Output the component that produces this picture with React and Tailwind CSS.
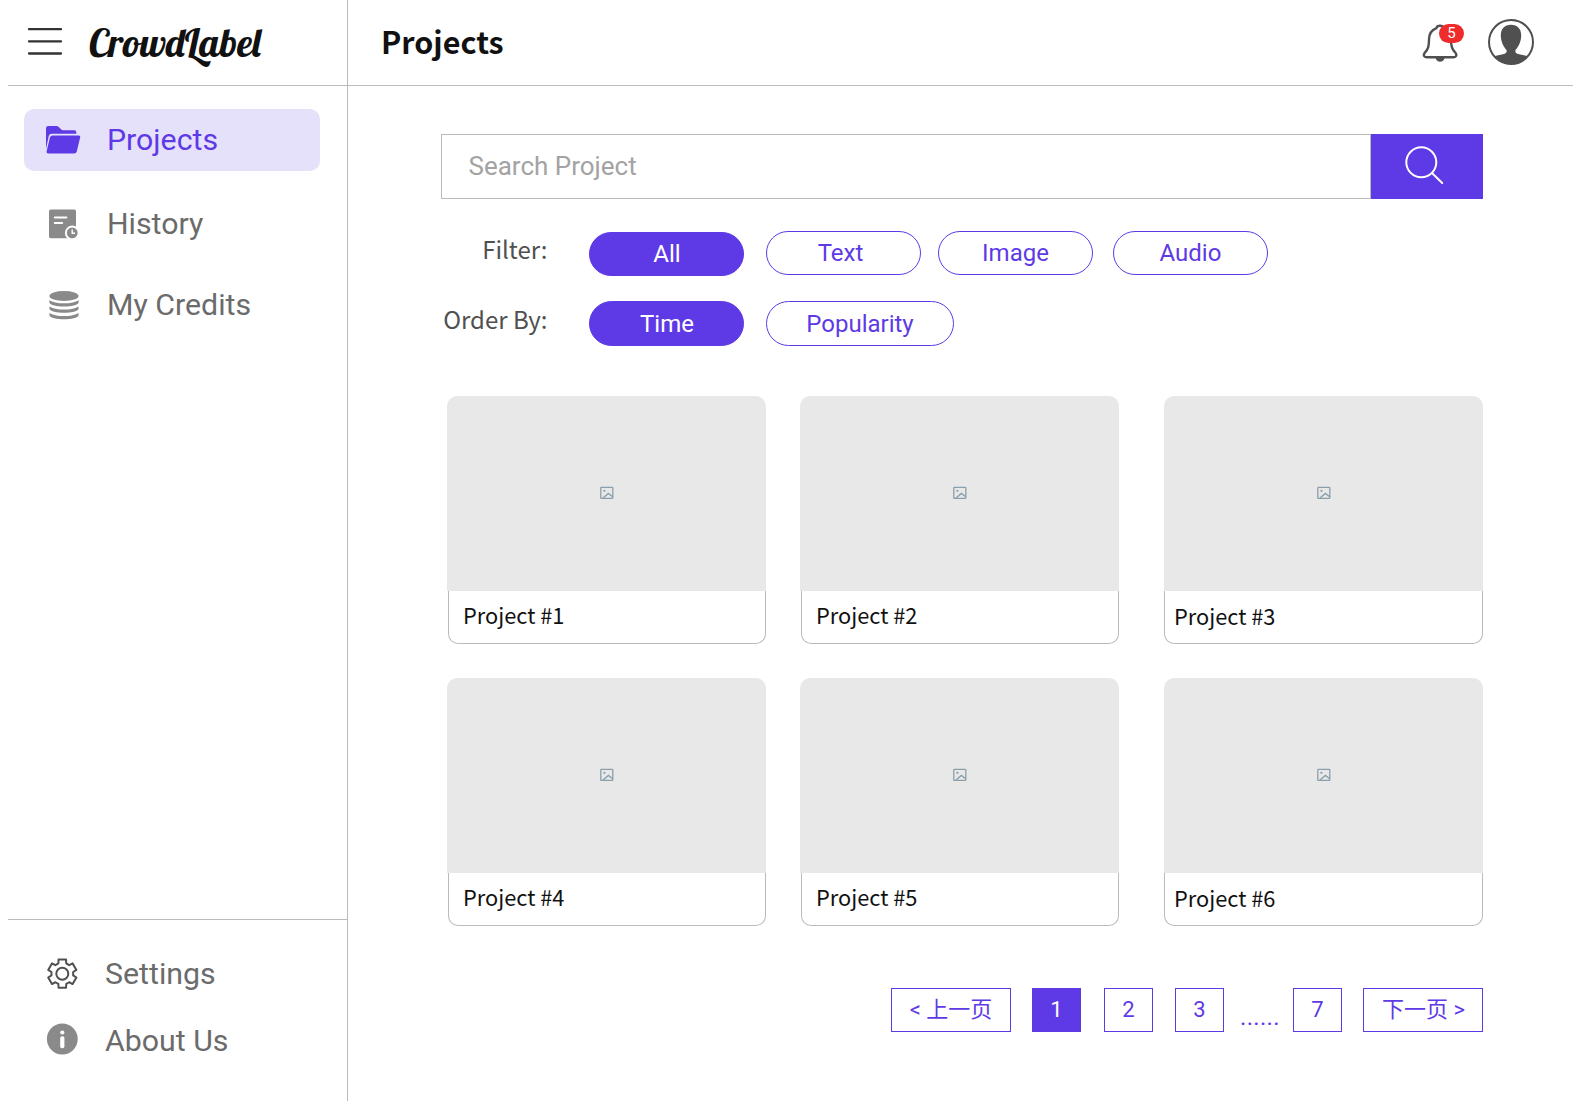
import React from "react";

const CJK = "font-['Noto_Sans_CJK_SC',sans-serif]";

function Gear() {
  const pts = [];
  for (let i = 0; i < 6; i++) {
    [[-21, 11], [-15, 14.6], [15, 14.6], [21, 11]].forEach(([d, r]) => {
      const a = ((i * 60 + d - 90) * Math.PI) / 180;
      pts.push(`${(16.3 + r * Math.cos(a)).toFixed(2)},${(15.7 + r * Math.sin(a)).toFixed(2)}`);
    });
  }
  return (
    <svg width="32" height="32" viewBox="0 0 32 32" fill="none" stroke="#505050" strokeWidth="2" strokeLinejoin="round">
      <polygon points={pts.join(" ")} />
      <circle cx="16.3" cy="15.7" r="6" />
    </svg>
  );
}

function Info() {
  return (
    <svg width="32" height="32" viewBox="0 0 32 32">
      <circle cx="16.3" cy="16" r="15.4" fill="#8a8a8a" />
      <circle cx="16.3" cy="9.5" r="2.1" fill="#fff" />
      <rect x="14.2" y="13.2" width="4.2" height="12" rx="1.9" fill="#fff" />
    </svg>
  );
}

function Folder() {
  return (
    <svg width="36" height="30" viewBox="0 0 36 30" fill="#5e3ae6">
      <path d="M1 24V3.2Q1 1 3.2 1H11.5Q12.8 1 13.7 2L16.3 4.6Q16.8 5.2 17.8 5.2H29.5Q31.3 5.2 31.3 7V8.8H7Q4.3 8.8 3.7 11.2Z" />
      <path d="M7.8 10.4H33.8Q35.7 10.4 35.2 12.3L31.8 26.4Q31.3 28.4 29.3 28.4H3.2Q1.2 28.4 1.6 26.4L4.9 12.4Q5.4 10.4 7.8 10.4Z" />
    </svg>
  );
}

function HistoryIcon() {
  return (
    <svg width="30" height="30" viewBox="0 0 30 30">
      <rect x="0" y="0.5" width="27" height="28.8" rx="1.8" fill="#8a8a8a" />
      <path d="M5.8 8.5H17.4M5.8 14.1H13.2" stroke="#fff" strokeWidth="2" strokeLinecap="round" />
      <circle cx="23.2" cy="23.9" r="7.3" fill="#fff" />
      <circle cx="23.2" cy="23.9" r="5.4" fill="#8a8a8a" />
      <path d="M23.2 20.6V24.2H26" stroke="#fff" strokeWidth="1.4" fill="none" />
    </svg>
  );
}

function Database() {
  return (
    <svg width="30" height="30" viewBox="0 0 30 30" fill="#8a8a8a">
      <ellipse cx="15" cy="6" rx="14.6" ry="5.1" />
      {[0, 6.3, 12.8].map((y) => (
        <path key={y} transform={`translate(0 ${y})`} d="M.4 10.2Q5 13.3 15 13.3T29.6 10.2V12.4C29 15 22 16.4 15 16.4S1 15 .4 12.4Z" />
      ))}
    </svg>
  );
}

function Bell() {
  return (
    <svg width="36" height="38" viewBox="0 0 36 38" fill="none" stroke="#505050" strokeWidth="2.4" strokeLinejoin="round">
      <path d="M14.4 4.2C15.2 1 20.8 1 21.6 4.2C27 6.2 29 10.4 29 15.5C29 22.5 30 24.8 33.4 28.8C35.2 31 34.2 33.2 31.8 33.2H4.4C2 33.2 1 31 2.8 28.8C6.2 24.8 7 22.5 7 15.5C7 10.4 9.4 6.2 14.4 4.2Z" />
      <path d="M13.6 33.8H22.6C22 39 14.2 39 13.6 33.8Z" fill="#505050" stroke="none" />
    </svg>
  );
}

function Avatar() {
  return (
    <svg width="48" height="48" viewBox="0 0 48 48">
      <clipPath id="face"><circle cx="24" cy="24" r="22.4" /></clipPath>
      <g clipPath="url(#face)" fill="#505050">
        <path d="M24 6.8C30.8 6.8 34.4 11.4 34.2 18C34 25.4 29.6 31 28.4 32C28.2 35 29 35.4 32 36.2C37 37.2 41 38 45 40V48H3V40C7 38 11 37.2 16 36.2C19 35.4 19.8 35 19.6 32C18.4 31 14 25.4 13.8 18C13.6 11.4 17.2 6.8 24 6.8Z" />
      </g>
      <circle cx="24" cy="24" r="22" fill="none" stroke="#505050" strokeWidth="2" />
    </svg>
  );
}

function NavItem({ icon, label, className = "", labelClass = "ml-[107px]" }) {
  return (
    <a className={`grid h-[62px] items-center text-[30.3px] leading-none ${className}`}>
      <span className="col-start-1 row-start-1 flex">{icon}</span>
      <span className={`col-start-1 row-start-1 ${labelClass}`}>{label}</span>
    </a>
  );
}

function Pill({ children, active, className = "" }) {
  return (
    <button
      className={`flex items-center justify-center rounded-full border border-[#5e3ae6] text-[24px] leading-none ${
        active ? "bg-[#5e3ae6] text-white" : "text-[#5e3ae6]"
      } ${className}`}
    >
      {children}
    </button>
  );
}

function Card({ title, last }) {
  return (
    <article className="flex h-[248px] w-[319px] flex-col">
      <div className="flex h-[195px] items-center justify-center rounded-t-[10px] bg-[#e8e8e8] pb-px">
        <svg width="14" height="14" viewBox="0 0 14 14" fill="none" stroke="#8a9fab" strokeWidth="1.3">
          <rect x=".8" y="1.4" width="12" height="11" rx=".6" />
          <circle cx="4.4" cy="4.8" r="1.1" fill="#8a9fab" stroke="none" />
          <path d="M3 12L8.4 7.4L13 11" />
        </svg>
      </div>
      <div
        className={`flex h-[53px] items-center rounded-b-[10px] border border-t-0 border-[#bbb] text-[21.8px] leading-none text-[#111] ${CJK} ${
          last ? "pb-[3px] pl-[9px]" : "ml-[1px] pb-[5px] pl-[14px]"
        }`}
      >
        {title}
      </div>
    </article>
  );
}

function Page({ children, active, className = "w-[49px]" }) {
  return (
    <button
      className={`flex h-[44px] items-center justify-center border border-[#5e3ae6] text-[22px] leading-none ${
        active ? "bg-[#5e3ae6] text-white" : "text-[#5e3ae6]"
      } ${className}`}
    >
      {children}
    </button>
  );
}

export default function App() {
  return (
    <div className="flex h-[1101px] w-[1573px] overflow-hidden bg-white font-[Roboto,'Noto_Sans_CJK_SC',sans-serif]">
      <aside className="flex w-[348px] flex-col border-r border-[#bbb] text-[#6b6b6b]">
        <div className="ml-2 flex h-[86px] shrink-0 items-center border-b border-[#bbb] pb-[3px] pl-[19px]">
          <svg width="36" height="30" viewBox="0 0 36 30" stroke="#333" strokeWidth="2.3" strokeLinecap="round">
            <path d="M2 3.2H34M2 15.4H34M2 27.5H34" />
          </svg>
          <span className="mt-[3px] ml-[26px] block whitespace-nowrap font-['Lobster','Liberation_Serif',serif] text-[39.1px] leading-none text-[#111]">
            CrowdLabel
          </span>
        </div>
        <nav className="flex flex-col pt-[23px]">
          <NavItem
            icon={<span className="ml-[21px]"><Folder /></span>}
            label="Projects"
            labelClass="ml-[83px]"
            className="ml-6 w-[296px] rounded-[10px] bg-[#e6e1fb] text-[#5e3ae6]"
          />
          <NavItem icon={<span className="ml-[49px]"><HistoryIcon /></span>} label="History" className="mt-[22px]" />
          <NavItem icon={<span className="ml-[49px]"><Database /></span>} label="My Credits" className="mt-[19px]" />
        </nav>
        <div className="mt-auto ml-2 flex h-[182px] flex-col border-t border-[#bbb] pt-[23px]">
          <NavItem icon={<span className="ml-[38px]"><Gear /></span>} label="Settings" labelClass="ml-[97px]" />
          <NavItem icon={<span className="-mt-[5px] ml-[38px]"><Info /></span>} label="About Us" labelClass="ml-[97px]" className="mt-[5px]" />
        </div>
      </aside>

      <main className="flex flex-1 flex-col">
        <header className="flex h-[86px] shrink-0 items-center border-b border-[#bbb] pr-[38px] pb-[2px] pl-[33px]">
          <h1 className={`text-[30.5px] leading-none font-bold text-[#111] ${CJK}`}>Projects</h1>
          <div className="relative mt-[2px] ml-auto">
            <Bell />
            <span className="absolute top-[0px] left-[17px] flex h-[19px] w-[25px] items-center justify-center rounded-full bg-[#f02b2b] text-[15px] leading-none text-white">
              5
            </span>
          </div>
          <div className="ml-[29px]"><Avatar /></div>
        </header>

        <div className="flex flex-col pl-[93px]">
          <div className="mt-12 flex h-[65px] w-[1042px]">
            <div className="flex flex-1 items-center border border-[#bbb] pb-[2px] pl-[26.5px] text-[26px] leading-none text-[#a3a3a3]">
              Search Project
            </div>
            <button className="flex w-[112px] bg-[#5e3ae6] pt-[11px] pl-[33px]">
              <svg width="40" height="42" viewBox="0 0 40 42" fill="none" stroke="#fff" strokeWidth="2" strokeLinecap="round">
                <circle cx="17.3" cy="17.3" r="15" />
                <path d="M28.2 28.2L38.2 38" />
              </svg>
            </button>
          </div>

          <div className="mt-[31px] flex h-[46px] items-start">
            <span className={`mt-[7px] w-[106.5px] text-right text-[24px] leading-none text-[#505050] ${CJK}`}>Filter:</span>
            <Pill active className="mt-[2px] ml-[41.5px] h-[44px] w-[155px] pl-[1px]">All</Pill>
            <Pill className="mt-[1px] ml-[22px] h-[44px] w-[155px] pr-[6px]">Text</Pill>
            <Pill className="mt-[1px] ml-[17px] h-[44px] w-[155px]">Image</Pill>
            <Pill className="mt-[1px] ml-[20px] h-[44px] w-[155px]">Audio</Pill>
          </div>
          <div className="mt-[25px] flex h-[45px] items-start">
            <span className={`mt-[6px] flex w-[106.5px] justify-end text-[24px] leading-none whitespace-nowrap text-[#505050] ${CJK}`}>Order By:</span>
            <Pill active className="ml-[41.5px] h-[45px] w-[155px] pl-[1px]">Time</Pill>
            <Pill className="ml-[22px] h-[45px] w-[188px]">Popularity</Pill>
          </div>

          <section className="mt-[50px] ml-[6px] grid grid-cols-[353px_364px_319px] gap-y-[34px]">
            {[1, 2, 3, 4, 5, 6].map((n) => (
              <Card key={n} title={`Project #${n}`} last={n % 3 === 0} />
            ))}
          </section>

          <div className="mt-[62px] flex w-[1042px] items-start justify-end text-[#5e3ae6]">
            <Page className="w-[120px]">&lt; 上一页</Page>
            <Page active className="ml-[21px] w-[49px]">1</Page>
            <Page className="ml-[23px] w-[49px]">2</Page>
            <Page className="ml-[22px] w-[49px]">3</Page>
            <span className="flex w-[69px] justify-center pt-[17px] pl-[3px] text-[24px] leading-none tracking-[0.3px]">......</span>
            <Page>7</Page>
            <Page className="ml-[21px] w-[120px] pl-[1px]">下一页 &gt;</Page>
          </div>
        </div>
      </main>
    </div>
  );
}
